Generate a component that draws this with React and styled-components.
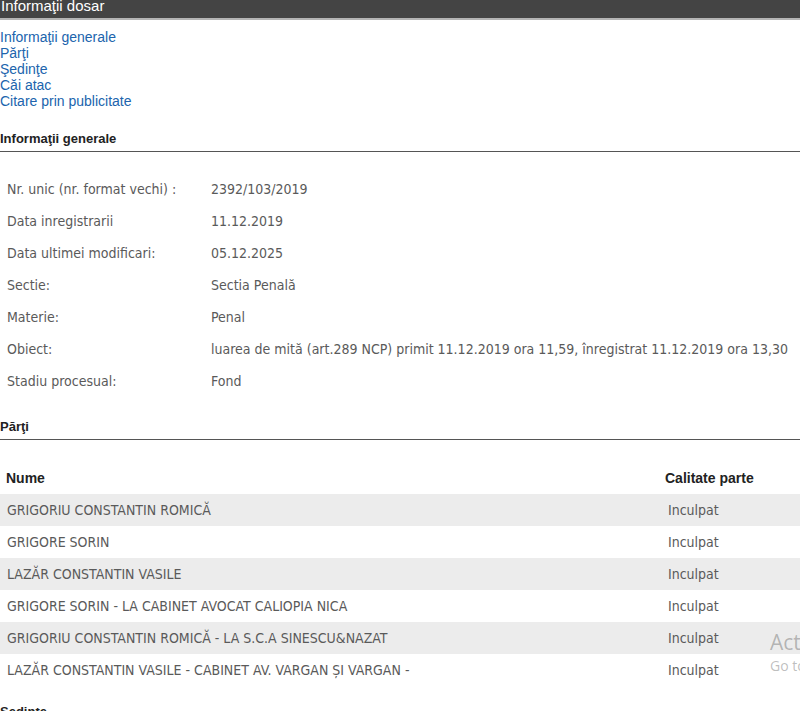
import React from 'react';
import styled, { createGlobalStyle } from 'styled-components';

const GlobalStyle = createGlobalStyle`
  html, body {
    margin: 0;
    padding: 0;
    background: #fff;
    overflow: hidden;
  }
  body {
    font-family: "Liberation Sans", Arial, sans-serif;
  }
`;

const Page = styled.div`
  position: relative;
  width: 800px;
  height: 711px;
  overflow: hidden;
`;

const TitleBar = styled.div`
  background: #444;
  color: #fff;
  height: 18px;
  border-bottom: 2px solid #b4b4b4;
  font-size: 15px;
  line-height: 15px;
  padding-left: 1px;
  overflow: hidden;

  span {
    display: block;
    margin-top: -2px;
  }
`;

const Nav = styled.nav`
  display: flex;
  flex-direction: column;
  margin-top: 9px;
`;

const NavLink = styled.a`
  color: #2064ad;
  font-size: 14px;
  line-height: 16px;
  text-decoration: none;
`;

const SectionTitle = styled.h3`
  margin: ${({top}) => top || '22px'} 0 0;
  padding-bottom: 4px;
  border-bottom: 1px solid #555;
  font-size: 13px;
  line-height: 16px;
  font-weight: bold;
  color: #222;
`;

const Grid = styled.table`
  border-collapse: collapse;
  width: ${({width}) => width || '100%'};
  margin-top: ${({top}) => top || '21px'};
  table-layout: fixed;
  font-family: "DejaVu Sans Condensed", "DejaVu Sans", sans-serif;
  font-size: 14px;
  color: #5a5a5a;
`;

const Row = styled.tr`
  height: 32px;
  background: ${({striped}) => striped ? '#ececec' : 'transparent'};
`;

const Cell = styled.td`
  padding: 0 0 0 ${({pad}) => pad || '7px'};
  vertical-align: middle;
  white-space: nowrap;
`;

const HeadCell = styled.th`
  padding: 0 0 0 ${({pad}) => pad || '6px'};
  text-align: left;
  font-family: "Liberation Sans", Arial, sans-serif;
  font-size: 14px;
  font-weight: bold;
  color: #222;
`;

const Watermark = styled.div`
  position: absolute;
  left: 770px;
  top: 628px;
  white-space: nowrap;
  color: rgba(110, 110, 110, 0.45);
  font-family: "Open Sans", sans-serif;

  div:first-child {
    font-size: 21px;
    line-height: 28px;
  }
  div:last-child {
    font-size: 14px;
    line-height: 20px;
  }
`;

const info = [
  ['Nr. unic (nr. format vechi) :', '2392/103/2019'],
  ['Data inregistrarii', '11.12.2019'],
  ['Data ultimei modificari:', '05.12.2025'],
  ['Sectie:', 'Sectia Penală'],
  ['Materie:', 'Penal'],
  ['Obiect:', 'luarea de mită (art.289 NCP) primit 11.12.2019 ora 11,59, înregistrat 11.12.2019 ora 13,30'],
  ['Stadiu procesual:', 'Fond'],
];

const parties = [
  'GRIGORIU CONSTANTIN ROMICĂ',
  'GRIGORE SORIN',
  'LAZĂR CONSTANTIN VASILE',
  'GRIGORE SORIN - LA CABINET AVOCAT CALIOPIA NICA',
  'GRIGORIU CONSTANTIN ROMICĂ - LA S.C.A SINESCU&NAZAT',
  'LAZĂR CONSTANTIN VASILE - CABINET AV. VARGAN ȘI VARGAN -',
];

export default function App() {
  return (
    <Page>
      <GlobalStyle />
      <TitleBar><span>Informaţii dosar</span></TitleBar>

      <Nav>
        <NavLink href="#info">Informaţii generale</NavLink>
        <NavLink href="#parti">Părţi</NavLink>
        <NavLink href="#sedinte">Şedinţe</NavLink>
        <NavLink href="#cai">Căi atac</NavLink>
        <NavLink href="#citare">Citare prin publicitate</NavLink>
      </Nav>

      <SectionTitle>Informaţii generale</SectionTitle>
      <Grid>
        <colgroup>
          <col style={{ width: 211 }} />
          <col />
        </colgroup>
        <tbody>
          {info.map(([label, value]) => (
            <Row key={label}>
              <Cell>{label}</Cell>
              <Cell pad="0">{value}</Cell>
            </Row>
          ))}
        </tbody>
      </Grid>

      <SectionTitle>Părţi</SectionTitle>
      <Grid width="900px" top="22px">
        <colgroup>
          <col style={{ width: 661 }} />
          <col />
        </colgroup>
        <thead>
          <Row>
            <HeadCell>Nume</HeadCell>
            <HeadCell pad="4px">Calitate parte</HeadCell>
          </Row>
        </thead>
        <tbody>
          {parties.map((name, i) => (
            <Row key={name} striped={i % 2 === 0}>
              <Cell>{name}</Cell>
              <Cell>Inculpat</Cell>
            </Row>
          ))}
        </tbody>
      </Grid>

      <SectionTitle top="18px">Şedinţe</SectionTitle>

      <Watermark>
        <div>Activate Windows</div>
        <div>Go to Settings to activate Windows.</div>
      </Watermark>
    </Page>
  );
}
